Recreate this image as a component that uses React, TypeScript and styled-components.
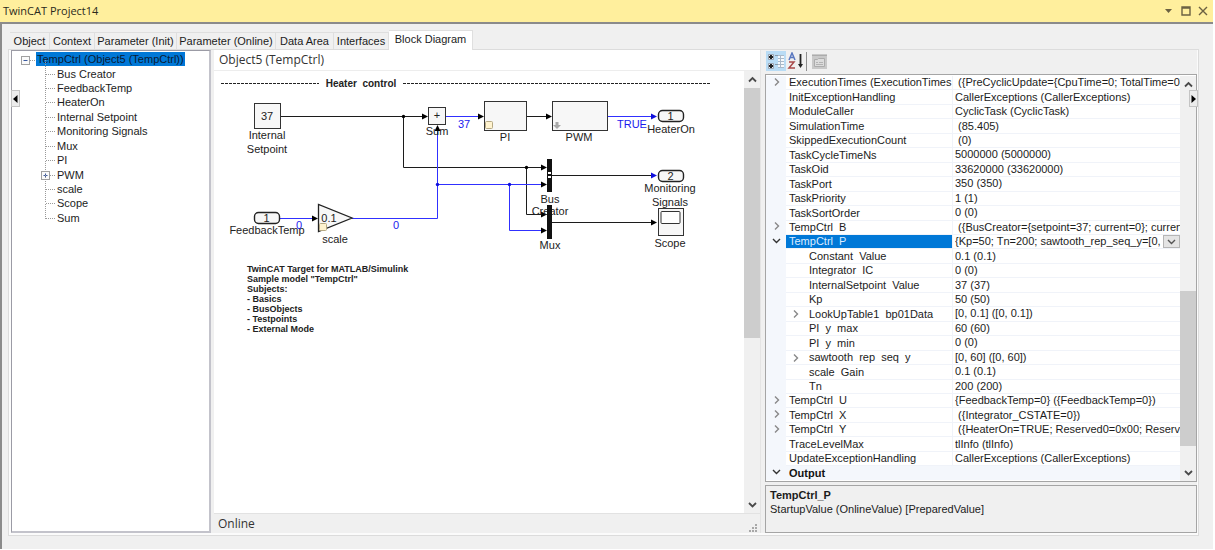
import React from "react";
import styled, { createGlobalStyle, css } from "styled-components";

const ARIAL = `"Liberation Sans", Arial, sans-serif`;
const SEGOE = `"Open Sans", "Noto Sans", sans-serif`;

const GlobalStyle = createGlobalStyle`
  *, *::before, *::after { box-sizing: border-box; }
  body { margin: 0; background: #fff; color: #1c1c1c; font: 11px/14px ${ARIAL}; }
  button { margin: 0; padding: 0; border: 0; background: none; color: inherit; font: inherit; }
  ul { list-style: none; margin: 0; padding: 0; }
`;

/* ---------- window frame ---------- */

const Window = styled.div`
  display: flex;
  flex-direction: column;
  height: 100vh;
  min-height: 540px;
  padding: 0 2px 1px 0;
`;

const TitleBar = styled.header`
  display: flex;
  align-items: center;
  justify-content: space-between;
  height: 22px;
  padding: 0 4px 0 3px;
  background: #ffef9d;
  font: 11px/20px ${SEGOE};
  color: #2b2a1c;
`;

const Title = styled.h1`
  margin: 0;
  font: inherit;
`;

const WindowButtons = styled.div`
  display: flex;
  gap: 4px;
`;

const WindowButton = styled.button`
  display: grid;
  place-items: center;
  width: 13px;
  height: 14px;
  color: #6b6142;
`;

const Body = styled.main`
  flex: 1;
  min-height: 0;
  display: flex;
  flex-direction: column;
  padding: 6px 14px 13px 6px;
  background: #f0f0f0;
  border-top: 2px solid #8b8b8b;
  border-left: 2px solid #8b8b8b;
`;

/* ---------- tabs ---------- */

const TabStrip = styled.div`
  display: flex;
  align-items: flex-end;
  height: 19px;
  padding-left: 2px;
  z-index: 1;
`;

const Tab = styled.button<{ $width: number; $active?: boolean }>`
  width: ${(p) => p.$width}px;
  height: 17px;
  line-height: 16px;
  border: 1px solid #dfdfdf;
  border-left-width: 0;
  border-bottom: 0;
  white-space: nowrap;
  ${(p) =>
    p.$active &&
    css`
      height: 20px;
      line-height: 17px;
      padding-bottom: 2px;
      margin-bottom: -1px;
      background: #fff;
    `}
`;

const TabPage = styled.div`
  flex: 1;
  min-height: 0;
  display: flex;
  position: relative;
  padding: 0 1px 2px 2px;
  border: 1px solid #dcdcdc;
  background: #fbfbfb;
`;

const CollapseButton = styled.button<{ $side: "left" | "right" }>`
  position: absolute;
  top: 40px;
  ${(p) => p.$side}: ${(p) => (p.$side === "left" ? 2 : 0)}px;
  display: grid;
  place-items: center;
  width: 9px;
  height: 17px;
  border: 1px solid #c4c4c4;
  background: #ececec;
`;

/* ---------- tree ---------- */

const TreePanel = styled.nav`
  flex: 0 0 200px;
  border: 1px solid #9b9ba5;
  border-right: 2px solid #c3c3cb;
  border-bottom: 2px solid #c3c3cb;
  background: #fff;
  padding-top: 1px;
`;

const TreeList = styled.ul`
  display: grid;
  grid-auto-rows: 1fr;
  height: 173px;
`;

const TreeRow = styled.li<{ $root?: boolean }>`
  display: flex;
  align-items: center;
  padding-left: ${(p) => (p.$root ? 8 : 28)}px;
`;

const Branch = styled.svg`
  display: block;
  flex: none;
  overflow: visible;
`;

const TreeLabel = styled.button<{ $selected?: boolean }>`
  padding: 0 1px;
  white-space: nowrap;
  ${(p) =>
    p.$selected &&
    css`
      background: #0078d7;
      color: #0a1a33;
    `}
`;

/* ---------- diagram ---------- */

const Splitter = styled.div`
  flex: 0 0 3px;
  background: #f0f0f0;
`;

const DiagramPanel = styled.section`
  flex: 1;
  min-width: 0;
  display: flex;
  flex-direction: column;
  background: #fff;
`;

const DiagramHeader = styled.h2`
  margin: 0;
  height: 21px;
  padding: 0 5px;
  border-bottom: 1px solid #ededed;
  font: 12px/20px ${SEGOE};
  color: #333;
`;

const DiagramScroll = styled.div`
  flex: 1;
  min-height: 0;
  display: flex;
`;

const Canvas = styled.div`
  flex: 1;
  min-width: 0;
  overflow: hidden;
`;

const Drawing = styled.svg`
  display: block;
  text {
    font: 11px ${ARIAL};
    fill: #222;
    text-anchor: middle;
  }
  .value {
    fill: #1a1aee;
  }
  .heading {
    font: bold 10px ${ARIAL};
    white-space: pre;
  }
  .note {
    font: bold 9px ${ARIAL};
    text-anchor: start;
  }
`;

const StatusBar = styled.footer`
  display: flex;
  justify-content: space-between;
  align-items: flex-end;
  height: 20px;
  padding: 0 2px 0 4px;
  border-top: 1px solid #e2e2e2;
  background: #f0f0f0;
  font: 12px/19px ${SEGOE};
  color: #333;
`;

/* ---------- scroll bar ---------- */

const ScrollTrack = styled.div`
  flex: 0 0 16px;
  display: flex;
  flex-direction: column;
  background: #f0f0f0;
`;

const ScrollButton = styled.button`
  display: grid;
  place-items: center;
  height: 17px;
  color: #4a4a4a;
`;

const ScrollPart = styled.div<{ $grow: number; $thumb?: boolean }>`
  flex: ${(p) => p.$grow} 0 0;
  background: ${(p) => (p.$thumb ? "#cdcdcd" : "transparent")};
`;

/* ---------- property grid ---------- */

const PropertyPanel = styled.aside`
  flex: 0 0 437px;
  display: flex;
  flex-direction: column;
  gap: 3px;
  padding: 0 0 0 4px;
  border-left: 1px solid #e4e4e4;
  background: #f0f0f0;
`;

const Toolbar = styled.div`
  display: flex;
  align-items: center;
  height: 21px;
  padding: 1px 1px 0;
`;

const ToolButton = styled.button<{ $active?: boolean }>`
  display: grid;
  place-items: center;
  width: 20px;
  height: 20px;
  background: ${(p) => (p.$active ? "#b9dcf5" : "transparent")};
`;

const ToolSeparator = styled.span`
  width: 1px;
  height: 19px;
  margin: 0 2px 0 0;
  background: #8f8f8f;
`;

const GridFrame = styled.div`
  flex: 1;
  min-height: 0;
  display: flex;
  padding-top: 1px;
  border: 1px solid #a5a5a5;
  background: #fff;
  overflow: hidden;
`;

const GridBody = styled.div`
  flex: 1;
  min-width: 0;
  padding-bottom: 1px;
`;

const Table = styled.table`
  width: 100%;
  height: 100%;
  table-layout: fixed;
  border-collapse: separate;
  border-spacing: 0;
  line-height: 13px;
  td,
  th {
    padding: 0;
    overflow: hidden;
    white-space: pre;
    text-align: left;
    font-weight: normal;
  }
`;

const GutterCol = styled.col`
  width: 20px;
`;
const NameCol = styled.col`
  width: 166px;
`;

const GutterCell = styled.td`
  background: #f4f7fc;
  text-align: center !important;
`;

const NameCell = styled.th<{ $selected?: boolean; $nested?: boolean }>`
  vertical-align: bottom;
  border-bottom: 1px solid #f0f3f9;
  background: ${(p) => (p.$selected ? "#0078d7" : "#fff")};
  color: ${(p) => (p.$selected ? "#dcecff" : "#1c1c1c")};
`;

const NameText = styled.div<{ $nested?: boolean }>`
  display: flex;
  align-items: center;
  padding-left: ${(p) => (p.$nested ? 5 : 3)}px;
`;

const NestedToggle = styled.span`
  flex: 0 0 18px;
  line-height: 0;
`;

const ValueCell = styled.td`
  vertical-align: middle;
  border-left: 1px solid #f0f3f9;
  border-bottom: 1px solid #f0f3f9;
`;

const ValueText = styled.div`
  display: flex;
  align-items: center;
  padding-left: 2px;
`;

const ValueClip = styled.span`
  flex: 1;
  min-width: 0;
  overflow: hidden;
`;

const DropButton = styled.button`
  display: grid;
  place-items: center;
  width: 17px;
  height: 13px;
  border: 1px solid #b5b5b5;
  background: #e4e4e4;
  color: #555;
`;

const CategoryCell = styled.th`
  background: #f4f7fc;
`;

const CategoryText = styled.strong`
  padding-left: 3px;
  color: #111;
`;

const Description = styled.div`
  height: 48px;
  padding: 2px 4px;
  border: 1px solid #a5a5a5;
`;

const DescriptionTitle = styled.strong`
  display: block;
`;

/* ---------- small glyphs ---------- */

type Dir = "up" | "down" | "right";
const chevrons: Record<Dir, string> = {
  up: "M1 6.5 L4.5 3 L8 6.5",
  down: "M1 3 L4.5 6.5 L8 3",
  right: "M3 1.5 L6.5 5 L3 8.5",
};

const Chevron = ({ dir, color = "currentColor", weight = 1.4 }: { dir: Dir; color?: string; weight?: number }) => (
  <svg width="9" height="10" viewBox="0 0 9 10">
    <path d={chevrons[dir]} fill="none" stroke={color} strokeWidth={weight} />
  </svg>
);

const ScrollBar = ({ before, thumb, after }: { before: number; thumb: number; after: number }) => (
  <ScrollTrack>
    <ScrollButton aria-label="Scroll up">
      <Chevron dir="up" weight={1.8} />
    </ScrollButton>
    <ScrollPart $grow={before} />
    <ScrollPart $grow={thumb} $thumb />
    <ScrollPart $grow={after} />
    <ScrollButton aria-label="Scroll down">
      <Chevron dir="down" weight={1.8} />
    </ScrollButton>
  </ScrollTrack>
);

/* ---------- data ---------- */

const tabs = [
  { label: "Object", width: 40 },
  { label: "Context", width: 45 },
  { label: "Parameter (Init)", width: 82 },
  { label: "Parameter (Online)", width: 99 },
  { label: "Data Area", width: 58 },
  { label: "Interfaces", width: 55 },
  { label: "Block Diagram", width: 84, active: true },
];

const treeItems = [
  "Bus Creator",
  "FeedbackTemp",
  "HeaterOn",
  "Internal Setpoint",
  "Monitoring Signals",
  "Mux",
  "PI",
  "PWM",
  "scale",
  "Scope",
  "Sum",
];

type Property = { name: string; value: string; toggle?: "right" | "down"; nested?: boolean; selected?: boolean };

const properties: Property[] = [
  { name: "ExecutionTimes (ExecutionTimes", value: " ({PreCyclicUpdate={CpuTime=0; TotalTime=0}", toggle: "right" },
  { name: "InitExceptionHandling", value: "CallerExceptions (CallerExceptions)" },
  { name: "ModuleCaller", value: "CyclicTask (CyclicTask)" },
  { name: "SimulationTime", value: " (85.405)" },
  { name: "SkippedExecutionCount", value: " (0)" },
  { name: "TaskCycleTimeNs", value: "5000000 (5000000)" },
  { name: "TaskOid", value: "33620000 (33620000)" },
  { name: "TaskPort", value: "350 (350)" },
  { name: "TaskPriority", value: "1 (1)" },
  { name: "TaskSortOrder", value: "0 (0)" },
  { name: "TempCtrl  B", value: " ({BusCreator={setpoint=37; current=0}; current=0", toggle: "right" },
  { name: "TempCtrl  P", value: "{Kp=50; Tn=200; sawtooth_rep_seq_y=[0, 60", toggle: "down", selected: true },
  { name: "Constant  Value", value: "0.1 (0.1)", nested: true },
  { name: "Integrator  IC", value: "0 (0)", nested: true },
  { name: "InternalSetpoint  Value", value: "37 (37)", nested: true },
  { name: "Kp", value: "50 (50)", nested: true },
  { name: "LookUpTable1  bp01Data", value: "[0, 0.1] ([0, 0.1])", nested: true, toggle: "right" },
  { name: "PI  y  max", value: "60 (60)", nested: true },
  { name: "PI  y  min", value: "0 (0)", nested: true },
  { name: "sawtooth  rep  seq  y", value: "[0, 60] ([0, 60])", nested: true, toggle: "right" },
  { name: "scale  Gain", value: "0.1 (0.1)", nested: true },
  { name: "Tn", value: "200 (200)", nested: true },
  { name: "TempCtrl  U", value: "{FeedbackTemp=0} ({FeedbackTemp=0})", toggle: "right" },
  { name: "TempCtrl  X", value: " ({Integrator_CSTATE=0})", toggle: "right" },
  { name: "TempCtrl  Y", value: " ({HeaterOn=TRUE; Reserved0=0x00; Reserve", toggle: "right" },
  { name: "TraceLevelMax", value: "tlInfo (tlInfo)" },
  { name: "UpdateExceptionHandling", value: "CallerExceptions (CallerExceptions)" },
];

const notes = [
  "TwinCAT Target for MATLAB/Simulink",
  'Sample model "TempCtrl"',
  "Subjects:",
  "- Basics",
  "- BusObjects",
  "- Testpoints",
  "- External Mode",
];

/* ---------- tree ---------- */

const Expander = ({ x, y, plus }: { x: number; y: number; plus?: boolean }) => (
  <g>
    <rect x={x - 4} y={y - 4} width="8" height="8" fill="#fafafa" stroke="#a0a0a0" />
    <path d={`M${x - 2} ${y}h4${plus ? `M${x} ${y - 2}v4` : ""}`} stroke="#3a5aa0" fill="none" />
  </g>
);

const Tree = () => (
  <TreePanel aria-label="Project tree">
    <TreeList>
      <TreeRow $root>
        <Branch width="16" height="14">
          <path d="M10 8.5h6" stroke="#9a9a9a" strokeDasharray="1 1" />
          <Expander x={5.5} y={8.5} />
        </Branch>
        <TreeLabel $selected>TempCtrl (Object5 (TempCtrl))</TreeLabel>
      </TreeRow>
      {treeItems.map((item, i) => (
        <TreeRow key={item}>
          <Branch width="16" height="14">
            <path
              d={`M5.5 -7V${i === treeItems.length - 1 ? 8 : 7}M6 7.5h9`}
              fill="none"
              stroke="#9a9a9a"
              strokeDasharray="1 1"
            />
            {item === "PWM" && <Expander x={5.5} y={7.5} plus />}
          </Branch>
          <TreeLabel>{item}</TreeLabel>
        </TreeRow>
      ))}
    </TreeList>
  </TreePanel>
);

/* ---------- block diagram ---------- */

const BLACK = "#1c1c1c";
const BLUE = "#3030ff";

const Wire = ({ d, color = BLACK }: { d: string; color?: string }) => (
  <path d={d} fill="none" stroke={color} strokeWidth="1" />
);

const Arrow = ({ x, y, color = "#000" }: { x: number; y: number; color?: string }) => (
  <path d={`M${x} ${y}l-6 -3v6z`} fill={color} />
);

const Port = ({ x, y, label }: { x: number; y: number; label: string }) => (
  <g>
    <rect x={x} y={y} width="25" height="11" rx="4" fill="#f7f7f7" stroke="#222" strokeWidth="1.4" />
    <text x={x + 12} y={y + 9}>{label}</text>
  </g>
);

const Block = ({ x, y, w, h }: { x: number; y: number; w: number; h: number }) => (
  <rect x={x} y={y} width={w} height={h} fill="#f7f7f7" stroke="#333" />
);

const Badge = ({ x, y }: { x: number; y: number }) => (
  <rect x={x} y={y} width="7" height="7" rx="1" fill="#fff3cf" stroke="#b5a883" />
);

const BlockDiagram = () => (
  <Drawing width="530" height="440" viewBox="0 0 530 440" role="img" aria-label="Heater control block diagram">
    <path d="M7 12.5H105M189 12.5H497" stroke="#222" strokeDasharray="3 1" />
    <text className="heading" x="147" y="16">{"Heater\u00a0 control"}</text>

    <Wire d="M67 45.5H209" />
    <Wire d="M189.5 45V96.5H328" />
    <Wire d="M312.5 96V143.5H328" />
    <Wire d="M313 45.5H333" />
    <Wire d="M338 104.5H438" />
    <Wire d="M338 151.5H438" />
    <Wire color={BLUE} d="M232 45.5H265" />
    <Wire color={BLUE} d="M393 45.5H438" />
    <Wire color={BLUE} d="M66 147.5H100" />
    <Wire color={BLUE} d="M138 147.5H223.5V58" />
    <Wire color={BLUE} d="M223 113.5H328" />
    <Wire color={BLUE} d="M295.5 113V159.5H328" />

    <circle cx="189.5" cy="45.5" r="1.7" fill="#000" />
    <circle cx="312.5" cy="96.5" r="1.7" fill="#000" />
    <circle cx="223.5" cy="113.5" r="1.7" fill="#1010dd" />
    <circle cx="295.5" cy="113.5" r="1.7" fill="#1010dd" />

    <Block x={40.5} y={32.5} w={26} h={25} />
    <text x="53" y="49">37</text>
    <text x="53" y="68">Internal</text>
    <text x="53" y="82">Setpoint</text>

    <Block x={214.5} y={36.5} w={17} h={17} />
    <text x="223" y="48">+</text>
    <text x="223" y="64">Sum</text>
    <path d="M223.5 54l-3 6h6z" fill="#000" />

    <Block x={270.5} y={30.5} w={42} h={29} />
    <Badge x={271.5} y={50.5} />
    <text x="291" y="70">PI</text>

    <Block x={338.5} y={30.5} w={55} h={29} />
    <path d="M341.5 51h3v3h2.5l-4 4l-4 -4h2.5z" fill="#a9a9a9" />
    <text x="365" y="70">PWM</text>

    <Arrow x={214} y={45.5} />
    <Arrow x={270} y={45.5} />
    <Arrow x={338} y={45.5} />
    <Arrow x={443} y={45.5} color="#1010dd" />
    <Arrow x={333} y={96.5} />
    <Arrow x={333} y={113.5} />
    <Arrow x={333} y={143.5} />
    <Arrow x={333} y={159.5} />
    <Arrow x={443} y={104.5} color="#1010dd" />
    <Arrow x={443} y={151.5} />
    <Arrow x={104} y={147.5} />

    <Port x={444.5} y={39.5} label="1" />
    <text x="457" y="62">HeaterOn</text>
    <Port x={444.5} y={99.5} label="2" />
    <text x="456" y="121">Monitoring</text>
    <text x="456" y="135">Signals</text>

    <text x="336" y="132">Bus</text>
    <text x="336" y="144">Creator</text>
    <text x="336" y="178">Mux</text>
    <rect x="333" y="88" width="5" height="33" fill="#111" />
    <rect x="334" y="101" width="3" height="2" fill="#fff" />
    <rect x="334" y="105" width="3" height="2" fill="#fff" />
    <rect x="333" y="134" width="5" height="34" fill="#111" />

    <Block x={444.5} y={137.5} w={25} h={27} />
    <rect x="447" y="140.5" width="19" height="12" rx="1" fill="#fff" stroke="#333" />
    <text x="456" y="176">Scope</text>

    <Port x={40.5} y={141.5} label="1" />
    <text x="53" y="163">FeedbackTemp</text>
    <path d="M104.5 133.5V160.5L138 147z" fill="#f7f7f7" stroke="#222" strokeWidth="1.3" />
    <text x="115" y="151">0.1</text>
    <Badge x={105.5} y={152.5} />
    <text x="121" y="172">scale</text>

    <text className="value" x="250" y="57">37</text>
    <text className="value" x="418" y="57">TRUE</text>
    <text className="value" x="85" y="158">0</text>
    <text className="value" x="182" y="158">0</text>

    {notes.map((line, i) => (
      <text key={line} className="note" x="33" y={201 + i * 10}>
        {line}
      </text>
    ))}
  </Drawing>
);

/* ---------- property grid ---------- */

const CategorizedIcon = () => (
  <svg width="18" height="18" viewBox="0 0 18 18">
    <path d="M1.500 2.500h5v5h-5zM1.500 11.500h5v5h-5z" fill="#e9eef5" stroke="#9aa4b0" />
    <path d="M2 4h4v2h-4zM3 3h2v4h-2zM2 13h4v2h-4zM3 12h2v4h-2z" fill="#222" />
    <path d="M8 3h3v1H8zM8 12h3v1H8z" fill="#8d99a6" />
    <path d="M11 3h6v13h-6z" fill="#a9b9c9" />
    <path d="M11 4h2v2h-2zM14 4h3v2h-3zM11 7h2v2h-2zM14 7h3v2h-3zM11 10h2v2h-2zM14 10h3v2h-3zM11 13h2v2h-2zM14 13h3v2h-3z" fill="#f6f9fc" />
  </svg>
);

const SortIcon = () => (
  <svg width="18" height="18" viewBox="0 0 18 18" fill="none">
    <path d="M2 8l3-7l3 7M3 5.500h4" stroke="#5a78c0" strokeWidth="1.500" />
    <path d="M2 10h5l-5 6h6" stroke="#a84a4a" strokeWidth="1.500" />
    <path d="M13.500 2v11" stroke="#222" strokeWidth="1.800" />
    <path d="M11 12h5l-2.500 4z" fill="#222" />
  </svg>
);

const PagesIcon = () => (
  <svg width="17" height="17" viewBox="0 0 17 17" fill="none">
    <rect x="1" y="1" width="15" height="15" fill="#c9c9c9" />
    <path d="M1 2.500h15" stroke="#acacac" />
    <path d="M3.500 6.500h3l1-1h6v8h-10z" fill="#dcdcdc" stroke="#acacac" />
    <path d="M5 9.500h2M8 9.500h4M5 11.500h7" stroke="#b3b3b3" />
  </svg>
);

const PropertyRow = ({ name, value, toggle, nested, selected }: Property) => (
  <tr aria-selected={selected}>
    <GutterCell>
      {toggle && !nested && (
        <Chevron dir={toggle} color={toggle === "down" ? "#333" : "#888"} />
      )}
    </GutterCell>
    <NameCell scope="row" $selected={selected}>
      <NameText $nested={nested}>
        {nested && <NestedToggle>{toggle && <Chevron dir={toggle} color="#888" />}</NestedToggle>}
        {name}
      </NameText>
    </NameCell>
    <ValueCell>
      <ValueText>
        <ValueClip>{value}</ValueClip>
        {selected && (
          <DropButton aria-label="Edit value">
            <Chevron dir="down" />
          </DropButton>
        )}
      </ValueText>
    </ValueCell>
  </tr>
);

const PropertyGrid = () => (
  <PropertyPanel>
    <Toolbar role="toolbar">
      <ToolButton $active aria-label="Categorized"><CategorizedIcon /></ToolButton>
      <ToolButton aria-label="Alphabetical"><SortIcon /></ToolButton>
      <ToolSeparator />
      <ToolButton aria-label="Property pages" disabled><PagesIcon /></ToolButton>
    </Toolbar>
    <GridFrame>
      <GridBody>
        <Table>
          <colgroup>
            <GutterCol />
            <NameCol />
            <col />
          </colgroup>
          <tbody>
            {properties.map((p) => (
              <PropertyRow key={p.name} {...p} />
            ))}
            <tr>
              <GutterCell><Chevron dir="down" color="#333" /></GutterCell>
              <CategoryCell colSpan={2}>
                <CategoryText>Output</CategoryText>
              </CategoryCell>
            </tr>
          </tbody>
        </Table>
      </GridBody>
      <ScrollBar before={200} thumb={156} after={18} />
    </GridFrame>
    <Description>
      <DescriptionTitle>TempCtrl_P</DescriptionTitle>
      StartupValue (OnlineValue) [PreparedValue]
    </Description>
  </PropertyPanel>
);

export default function App() {
  return (
    <>
      <GlobalStyle />
      <Window>
        <TitleBar>
          <Title>TwinCAT Project14</Title>
          <WindowButtons>
            <WindowButton aria-label="Window menu">
              <svg width="9" height="9"><path d="M1 2h7l-3.500 4z" fill="currentColor" /></svg>
            </WindowButton>
            <WindowButton aria-label="Maximize">
              <svg width="10" height="10"><path d="M1 2h8M1 1v8h8v-8z" fill="none" stroke="currentColor" strokeWidth="1.4" /></svg>
            </WindowButton>
            <WindowButton aria-label="Close">
              <svg width="10" height="10"><path d="M1 1l8 8M9 1l-8 8" stroke="currentColor" strokeWidth="1.4" /></svg>
            </WindowButton>
          </WindowButtons>
        </TitleBar>
        <Body>
          <TabStrip role="tablist">
            {tabs.map((t) => (
              <Tab key={t.label} role="tab" aria-selected={!!t.active} $width={t.width} $active={t.active}>
                {t.label}
              </Tab>
            ))}
          </TabStrip>
          <TabPage role="tabpanel">
            <Tree />
            <Splitter />
            <DiagramPanel>
              <DiagramHeader>Object5 (TempCtrl)</DiagramHeader>
              <DiagramScroll>
                <Canvas>
                  <BlockDiagram />
                </Canvas>
                <ScrollBar before={0} thumb={249} after={157} />
              </DiagramScroll>
              <StatusBar>
                Online
                <svg width="10" height="10" fill="#a8a8a8">
                  <path d="M7 1h2v2h-2zM4 4h2v2h-2zM7 4h2v2h-2zM1 7h2v2h-2zM4 7h2v2h-2zM7 7h2v2h-2z" />
                </svg>
              </StatusBar>
            </DiagramPanel>
            <PropertyGrid />
            <CollapseButton $side="left" aria-label="Collapse tree">
              <svg width="5" height="8"><path d="M4.500 0v8l-4.500-4z" fill="#000" /></svg>
            </CollapseButton>
            <CollapseButton $side="right" aria-label="Collapse properties">
              <svg width="5" height="8"><path d="M0.500 0v8l4.500-4z" fill="#000" /></svg>
            </CollapseButton>
          </TabPage>
        </Body>
      </Window>
    </>
  );
}
